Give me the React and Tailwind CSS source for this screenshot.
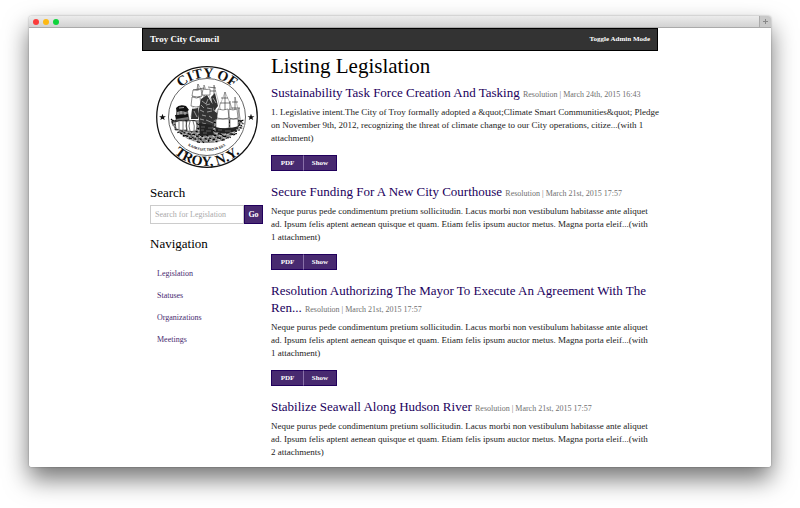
const loremLines = (last) => [
  'Neque purus pede condimentum pretium sollicitudin. Lacus morbi non vestibulum habitasse ante aliquet',
  'ad. Ipsum felis aptent aenean quisque et quam. Etiam felis ipsum auctor metus. Magna porta eleif...(with',
  last,
];

const ITEMS = [
  {
    title: 'Sustainability Task Force Creation And Tasking',
    meta: 'Resolution | March 24th, 2015 16:43',
    lines: [
      '1. Legislative intent.The City of Troy formally adopted a &quot;Climate Smart Communities&quot; Pledge',
      'on November 9th, 2012, recognizing the threat of climate change to our City operations, citize...(with 1',
      'attachment)',
    ],
    actions: true,
  },
  {
    title: 'Secure Funding For A New City Courthouse',
    meta: 'Resolution | March 21st, 2015 17:57',
    lines: loremLines('1 attachment)'),
    actions: true,
  },
  {
    title: 'Resolution Authorizing The Mayor To Execute An Agreement With The Ren...',
    meta: 'Resolution | March 21st, 2015 17:57',
    lines: loremLines('1 attachment)'),
    actions: true,
  },
  {
    title: 'Stabilize Seawall Along Hudson River',
    meta: 'Resolution | March 21st, 2015 17:57',
    lines: loremLines('2 attachments)'),
    actions: false,
  },
];

const LINKS = ['Legislation', 'Statuses', 'Organizations', 'Meetings'];

// Deterministic hatching for the engraved hillside below the ships.
const HATCH = Array.from({ length: 260 }, (_, i) => {
  const x = 15 + ((i * 37) % 71) + ((i * 13) % 7) / 7;
  const half = Math.sqrt(Math.max(0, 1 - ((x - 51) / 36) ** 2));
  const y = 54 + (((i * 53) % 97) / 97) * 23 * half;
  return `M${x.toFixed(1)} ${y.toFixed(1)}l${1 + (i % 2)} ${((i % 5) - 2) / 2}`;
}).join('');

function Seal() {
  return (
    <svg viewBox="0 0 102 102" className="block w-[102px]" role="img" aria-label="City of Troy, N.Y. seal">
      <defs>
        <path id="seal-top" d="M11.500 51a39.500 39.500 0 0 1 79 0" />
        <path id="seal-bottom" d="M2 51a49 49 0 0 0 98 0" />
        <path id="seal-motto" d="M15 49a36 36 0 0 0 72 0" />
      </defs>
      <circle cx="51" cy="51" r="50.300" fill="#fff" stroke="#111" strokeWidth="1.300" />
      <circle cx="51" cy="51" r="38.500" fill="#fff" stroke="#222" strokeWidth=".7" />
      <g fill="#111" fontFamily="'Liberation Serif', serif" textAnchor="middle">
        <text fontSize="14" fontWeight="700">
          <textPath href="#seal-top" startOffset="50%">CITY OF</textPath>
        </text>
        <text fontSize="14" fontWeight="700">
          <textPath href="#seal-bottom" startOffset="50%">TROY, N.Y.</textPath>
        </text>
        <text fontSize="3.500" fontFamily="'Liberation Sans', sans-serif" fontWeight="700">
          <textPath href="#seal-motto" startOffset="50%">ILIUM FUIT, TROJA EST.</textPath>
        </text>
      </g>
      <path
        fill="#111"
        d="M6.500 47.800l.9 2.400h2.500l-2 1.500.8 2.400-2.200-1.400-2.200 1.400.8-2.400-2-1.500h2.500zM95 47.800l.9 2.400h2.500l-2 1.500.8 2.400-2.200-1.400-2.200 1.400.8-2.400-2-1.500h2.500z"
      />
      <path fill="#888" d="M15 55q4-2 9-1h51l10 2q-2 9-11 15-10 6-23 6-15 0-24-7-9-6-12-15z" />
      <path d={HATCH} stroke="#000" strokeWidth="1.200" />
      <path d={HATCH} stroke="#fff" strokeWidth=".5" transform="translate(1 1.600)" />
      <g fill="none" stroke="#222" strokeWidth=".6">
        <path d="M42 18v33M48 19v35M58 19v33M69 26v34M79 31v26M74 35v20M83 42v13" />
        <path d="M37 24l11-2M36 30h10M52 21l8 1M50 25h10M64 37h10M65 32h7M76 36h6M75 42h9" />
        <path d="M42 18l-7 33M48 19l14 30M58 19l8 30M69 26l13 29M69 26l-9 24M79 31l6 24M42 18l12 20" strokeWidth=".3" />
      </g>
      <g fill="#fff" stroke="#222" strokeWidth=".5">
        <path d="M37 24q5 1 8-1l1 7q-5 2-10 0zM36 31q5 2 8 0l1 9q-5 2-10 0zM47 23q4 1 7 0v6h-8z" />
        <path d="M62 43q5 2 10 0l1 9q-6 2-12 0zM73 43q4 2 8 0l1 9q-5 2-9 0zM60 53h13v9q-6 2-13 0zM74 53h8v8q-4 2-8 1z" />
      </g>
      <path fill="#333" d="M45 33l6-4 3 5 3 5 1 22H44l-2-13zM55 31l4-4 3 13-4 5zM36 43l6-1v11h-7zM57 44l4 3v6l-4 2z" />
      <path stroke="#ddd" strokeWidth=".6" fill="none" d="M46 35l4 3M52 33l-2 5M45 39l3 3M51 42l5 1M50 39l4-1M44 44l4 2M51 46l5-1M46 49l4 1M53 50l3 2M44 53l4 1M50 54l7 3M46 57l4 1M57 32l3 5M38 45l3 6" />
      <path fill="#777" stroke="#111" strokeWidth=".6" d="M21 42q5-2 10 0l2 12-13 1z" />
      <path fill="#111" d="M20 42q3-4 10-2l3 4-3 2q-5-2-9 0zM19 49l13-1v3l-12 2z" />
      <path stroke="#ddd" strokeWidth=".7" d="M22 46v3M25 45v3M29 46v3M23 42l5-.5" />
      <path fill="#fff" stroke="#111" strokeWidth=".6" d="M19 56q6-2 11-1l1 9q-6 1-11-1zM31 55q5-1 9 0 2 5 0 10-5 1-9 0-2-5 0-10z" />
      <path stroke="#222" strokeWidth=".6" fill="none" d="M34 55q-2 5 0 10M37 55q2 5 1 10M23 56v7M27 55v9" />
      <path fill="#222" d="M59 61q12 3 24-1l-4 5q-9 4-19 1zM43 57l13 2 2 10-14 1z" />
      <path stroke="#999" strokeWidth=".5" d="M62 64h4M69 65h6M45 61h4M52 62h4M45 64h3M50 65h5M47 67h4" />
    </svg>
  );
}

function Item({ title, meta, lines, actions }) {
  return (
    <article className="mb-3 last:mb-0">
      <h2 className="text-[13px] leading-[17px] text-[#21005c]">
        <a href="#item">{title}</a>{' '}
        <small className="text-[8px] text-[#707070]">{meta}</small>
      </h2>
      <p className="mt-[3px] text-[9px] leading-[13px] whitespace-nowrap text-[#222]">
        {lines.map((line) => <span key={line} className="block">{line}</span>)}
      </p>
      {actions && (
        <div className="mt-[10px] flex text-[7px] leading-[14px] font-bold text-white">
          <button className="w-8 border border-r-0 border-[#21005c] bg-[#482a70]">PDF</button>
          <button className="w-[34px] border border-[#21005c] border-l-[#8870a8] bg-[#482a70]">Show</button>
        </div>
      )}
    </article>
  );
}

export default function App() {
  return (
    <div className="bg-white px-[29px] pt-4 pb-10 font-['Liberation_Serif',serif] text-[#222]">
      <div className="overflow-hidden rounded-[3px] shadow-[0_12px_24px_rgba(0,0,0,0.55),0_0_2px_rgba(0,0,0,0.35)]">
        <div className="flex h-3 items-center border-b border-[#aaa] bg-linear-to-b from-[#ececec] to-[#d2d2d2]">
          <div className="flex flex-1 gap-1 pl-1">
            <span className="size-[6px] rounded-full bg-[#fb3b3b]" />
            <span className="size-[6px] rounded-full bg-[#fdb914]" />
            <span className="size-[6px] rounded-full bg-[#0fd33c]" />
          </div>
          <button aria-label="New tab" className="flex h-full w-3 items-center justify-center border-l border-[#aaa] bg-[#c8c8c8]">
            <svg viewBox="0 0 7 7" className="size-[7px]" stroke="#888"><path d="M3.500 1v5M1 3.500h5" /></svg>
          </button>
        </div>
        <div className="bg-white pb-2">
          <div className="mx-auto max-w-[516px]">
            <header className="flex items-center justify-between border border-black bg-[#333] px-[7px] leading-[21px] text-white">
              <h1 className="text-[9px] font-bold">Troy City Council</h1>
              <button className="text-[7px] font-bold">Toggle Admin Mode</button>
            </header>
            <div className="flex">
              <aside className="w-1/4 px-2">
                <div className="flex justify-center pt-[15px]"><Seal /></div>
                <h3 className="mt-[17px] text-[13px] leading-4 text-black"><label htmlFor="search">Search</label></h3>
                <form className="mt-1 flex">
                  <input
                    id="search"
                    placeholder="Search for Legislation"
                    className="h-[19px] min-w-0 flex-1 border border-[#ccc] px-1 text-[8px] placeholder:text-[#aaa]"
                  />
                  <button type="button" className="w-[19px] border border-[#21005c] bg-[#482a70] text-[8px] font-bold text-white">Go</button>
                </form>
                <h3 className="mt-3 text-[13px] leading-4 text-black">Navigation</h3>
                <nav className="mt-[11px] px-[7px] text-[8px] leading-[22px] text-[#482a70]">
                  {LINKS.map((l) => <a key={l} href="#nav" className="block">{l}</a>)}
                </nav>
              </aside>
              <main className="w-3/4">
                <h2 className="mt-[3px] mb-[6px] text-[21px] leading-6 text-black">Listing Legislation</h2>
                {ITEMS.map((item) => <Item key={item.title} {...item} />)}
              </main>
            </div>
          </div>
        </div>
      </div>
    </div>
  );
}
